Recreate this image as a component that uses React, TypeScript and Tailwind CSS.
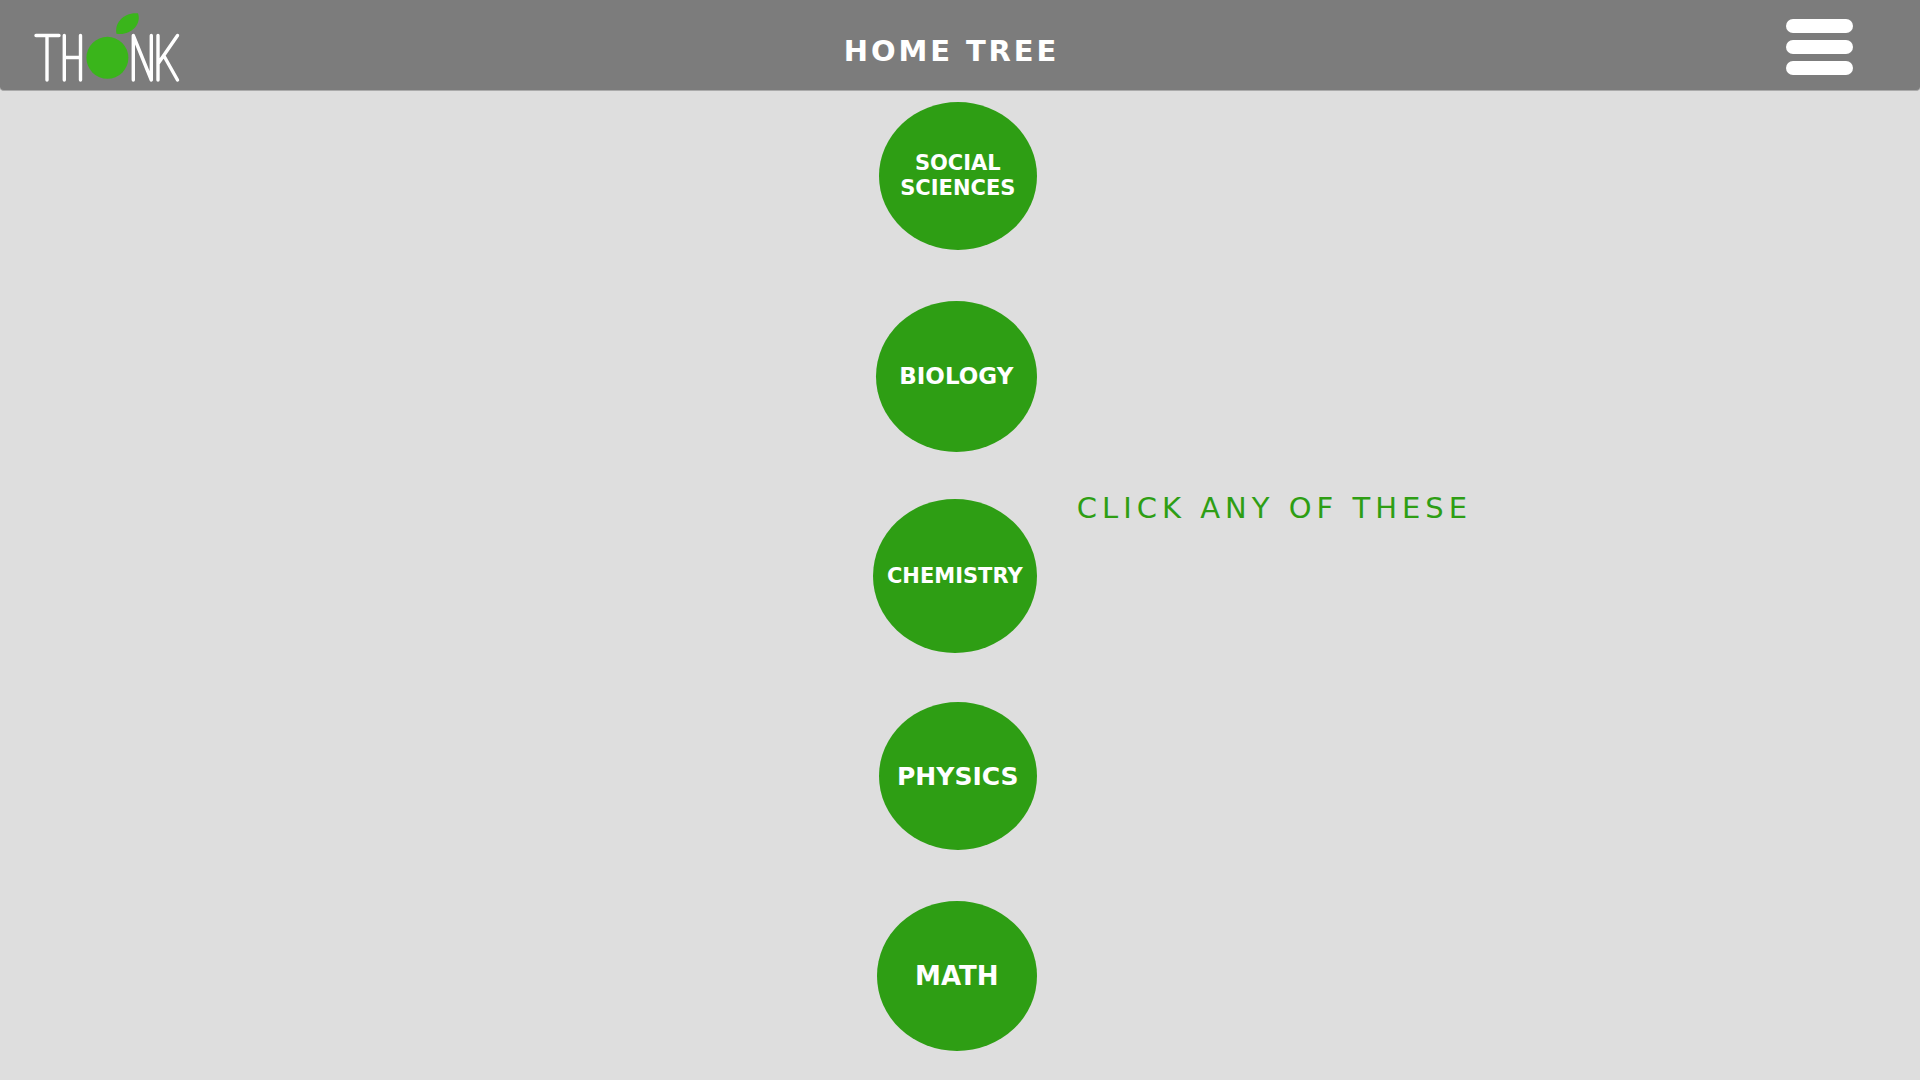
const topics = [
  { label: "SOCIAL SCIENCES", className: "w-[158px] h-[148px] text-[21px] leading-[25px]" },
  { label: "BIOLOGY", className: "w-[161px] h-[151px] text-[23px] leading-[25px]" },
  {
    label: "CHEMISTRY",
    className: "w-[164px] h-[154px] text-[21px] leading-[25px]",
    hint: "CLICK ANY OF THESE",
  },
  { label: "PHYSICS", className: "w-[158px] h-[148px] text-[25px] leading-[25px]" },
  { label: "MATH", className: "w-[160px] h-[150px] text-[26px] leading-[25px]" },
];

function Logo() {
  return (
    <svg width="146" height="72" viewBox="34 11 146 72" fill="none" role="img" aria-label="Thonk">
      <g stroke="#fff" strokeWidth="3.400" strokeLinecap="round" strokeLinejoin="round">
        <path d="M36 35.500H59M47 35.500V80" />
        <path d="M64.300 35.500V80M80.500 35.500V80M64.300 57.500H80.500" />
        <path d="M133.300 80V35.500L151.300 80V35.500" />
        <path d="M158 35.500V80M177.500 35.500L158.500 63M164 56L177.500 80" />
      </g>
      <circle cx="107.400" cy="57.800" r="21" fill="#3ab51b" />
      <path d="M116.500 33.800C114 23 124 12 138 13.300C142 25 130 36 116.500 33.800Z" fill="#3ab51b" />
    </svg>
  );
}

export default function App() {
  return (
    <div className="min-h-screen bg-[#dedede] font-['DejaVu_Sans',sans-serif]">
      <header className="grid h-[91px] grid-cols-[1fr_auto_1fr] items-center rounded-b-sm border-b border-[#aaaaaa] bg-[#7c7c7c] pt-[3px] pr-[51px] pl-[34px]">
        <a href="#" className="justify-self-start">
          <Logo />
        </a>
        <h1 className="pt-2 text-[29px] leading-9 font-bold tracking-widest text-white">HOME TREE</h1>
        <button type="button" aria-label="Menu" className="flex flex-col gap-[7px] justify-self-end px-4">
          <span className="h-3.5 w-[67px] rounded-full bg-white" />
          <span className="h-3.5 w-[67px] rounded-full bg-white" />
          <span className="h-3.5 w-[67px] rounded-full bg-white" />
        </button>
      </header>
      <main>
        <ul className="flex flex-col gap-[46px] pt-2">
          {topics.map((topic) => (
            <li key={topic.label} className="grid h-[154px] grid-cols-[54%_46%] items-center">
              <button
                type="button"
                className={`flex cursor-pointer items-center justify-center justify-self-end rounded-[50%] bg-[#2e9e14] px-2 text-center font-bold text-white ${topic.className}`}
              >
                {topic.label}
              </button>
              {topic.hint && (
                <p className="self-start pl-10 text-[29px] leading-[18px] tracking-[5px] text-[#2e9e14]">{topic.hint}</p>
              )}
            </li>
          ))}
        </ul>
      </main>
    </div>
  );
}
